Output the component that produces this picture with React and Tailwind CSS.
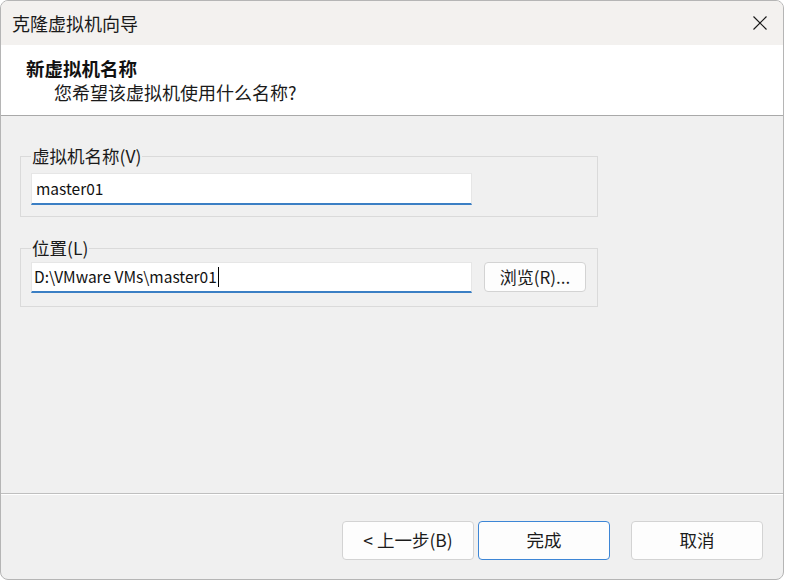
import React from "react";

const font = { fontFamily: '"Noto Sans CJK SC", "Noto Sans", sans-serif' };

function Btn({ children, primary, className = "" }) {
  return (
    <button
      className={`h-[39px] w-[132px] rounded-[4px] border bg-[#fdfdfd] text-[17.5px] text-[#1b1b1b] ${
        primary ? "border-[#3d86d6]" : "border-[#d3d3d3]"
      } ${className}`}
    >
      {children}
    </button>
  );
}

export default function App() {
  return (
    <div className="w-[786px] h-[581px] bg-white" style={font}>
      <div className="w-[784px] h-[580px] rounded-[8px] border border-[#b5b5b5] overflow-hidden flex flex-col bg-[#f0f0f0]">
        {/* Title bar */}
        <div className="h-[44px] shrink-0 bg-[#f3f1ef] flex items-center justify-between pl-[11px] pr-[15px]">
          <span className="text-[18px] text-[#1a1a1a] leading-none">克隆虚拟机向导</span>
          <svg width="16" height="16" viewBox="0 0 16 16">
            <path d="M1.5 1.5 L14.5 14.5 M14.5 1.5 L1.5 14.5" stroke="#1a1a1a" strokeWidth="1.2" fill="none" />
          </svg>
        </div>

        {/* Header */}
        <div className="h-[71px] shrink-0 bg-white border-b border-[#a9a9a9] pt-[11px] pl-[25px]">
          <div className="text-[18.5px] font-bold leading-[24px] text-[#111]">新虚拟机名称</div>
          <div className="text-[18px] leading-[25px] pl-[28px] text-[#1a1a1a]">您希望该虚拟机使用什么名称?</div>
        </div>

        {/* Body */}
        <div className="flex-1 pt-[29px] pl-[19px] flex flex-col gap-[20px]">
          <fieldset className="w-[578px] border border-[#dadada] pl-[10px] pb-[11px]">
            <legend className="px-[1px] text-[17.5px] leading-[22px] text-[#1a1a1a]">虚拟机名称(V)</legend>
            <div className="mt-[6px] w-[441px] h-[32px] bg-white border border-[#e6e6e6] border-b-2 border-b-[#3b7fc4] flex items-center pl-[4px] text-[15.5px] text-[#111]">
              master01
            </div>
          </fieldset>

          <fieldset className="w-[578px] border border-[#dadada] pl-[10px] pb-[13px]">
            <legend className="px-[1px] text-[17.5px] leading-[22px] text-[#1a1a1a]">位置(L)</legend>
            <div className="mt-[3px] flex items-start gap-[12px]">
              <div className="w-[441px] h-[31px] bg-white border border-[#e6e6e6] border-b-2 border-b-[#3b7fc4] flex items-center pl-[2px] text-[15.5px] text-[#111]">
                <span>D:\VMware VMs\master01</span>
                <span className="w-px h-[20px] bg-black ml-[1px]" />
              </div>
              <button className="w-[102px] h-[30px] rounded-[4px] border border-[#d3d3d3] bg-[#fdfdfd] text-[17px] text-[#1b1b1b]">
                浏览(R)...
              </button>
            </div>
          </fieldset>
        </div>

        {/* Separator */}
        <div className="h-[2px] shrink-0 border-t border-[#bfbfbf] border-b border-b-white" />

        {/* Footer */}
        <div className="h-[84px] shrink-0 flex items-start justify-end pt-[26px] pr-[20px]">
          <Btn>&lt; 上一步(B)</Btn>
          <Btn primary className="ml-[4px]">完成</Btn>
          <Btn className="ml-[21px]">取消</Btn>
        </div>
      </div>
    </div>
  );
}
